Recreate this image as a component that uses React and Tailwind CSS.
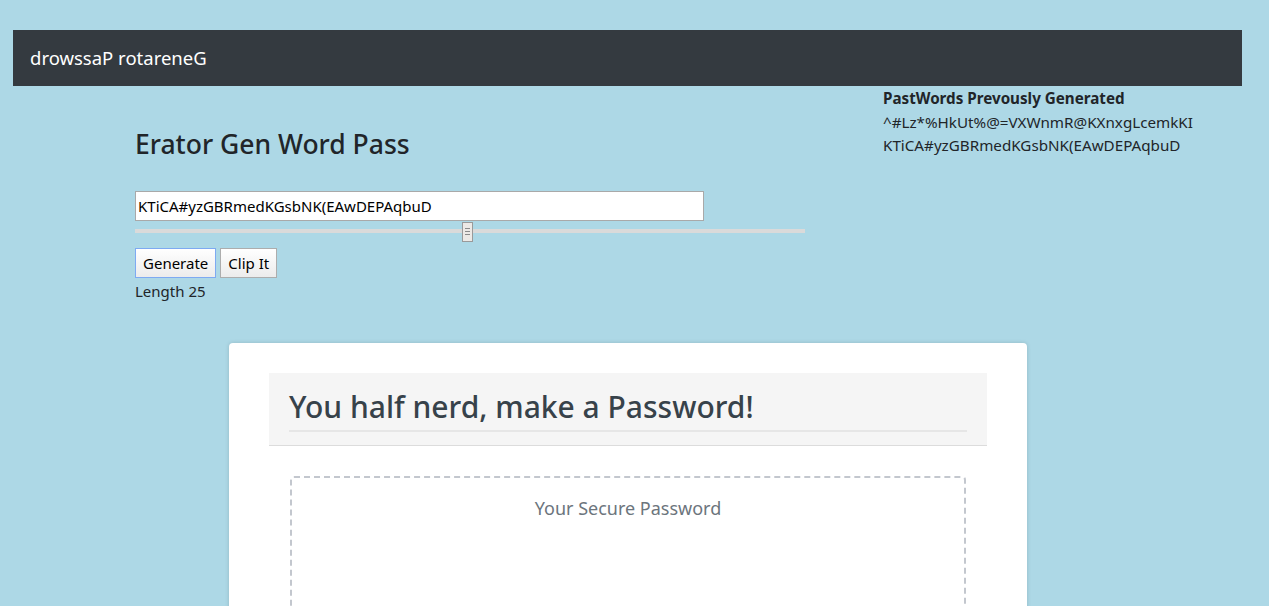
import { useState } from "react";

const history = [
  "^#Lz*%HkUt%@=VXWnmR@KXnxgLcemkKI",
  "KTiCA#yzGBRmedKGsbNK(EAwDEPAqbuD",
];

function Slider({ value }) {
  const pct = ((value - 8) / (42 - 8)) * 100;
  return (
    <div className="relative mt-[1px] h-[20px] w-[670px]">
      <div className="absolute left-0 right-0 top-[7px] h-[4px] bg-[#dadada]" />
      <div
        className="absolute top-0 flex h-[20px] w-[11px] flex-col items-center justify-center gap-[2px] border border-[#9a9a9a] bg-[#ece9e6]"
        style={{ left: `${pct}%` }}
      >
        <span className="h-px w-[5px] bg-[#8a8a8a]" />
        <span className="h-px w-[5px] bg-[#8a8a8a]" />
        <span className="h-px w-[5px] bg-[#8a8a8a]" />
      </div>
    </div>
  );
}

export default function App() {
  const [password] = useState("KTiCA#yzGBRmedKGsbNK(EAwDEPAqbuD");

  return (
    <div className="min-h-screen bg-[#add8e6] pt-[30px] font-['Noto_Sans',sans-serif] text-[#212529]">
      <nav className="ml-[13px] flex h-[56px] w-[1229px] items-center bg-[#343a40] px-[17px]">
        <span className="text-[18.5px] text-white">drowssaP rotareneG</span>
      </nav>

      <div className="ml-[13px] flex w-[1229px]">
        <div className="w-[870px] pl-[122px]">
          <h3 className="mt-[43px] text-[26.5px] font-medium leading-[1.2]">Erator Gen Word Pass</h3>
          <input
            readOnly
            value={password}
            className="mt-[30px] block h-[30px] w-[569px] border border-[#a9a9a9] bg-white px-[2px] text-[15px] text-black outline-none"
          />
          <Slider value={24.6} />
          <div className="mt-[6px] flex gap-[4px] text-[15px] text-black">
            <button className="h-[30px] border border-[#7eaaf2] bg-gradient-to-b from-white to-[#ececec] px-[7px]">
              Generate
            </button>
            <button className="h-[30px] border border-[#adadad] bg-gradient-to-b from-white to-[#ececec] px-[7px]">
              Clip It
            </button>
          </div>
          <p className="mt-[1px] text-[15px] leading-[24px]">Length 25</p>
        </div>

        <div className="text-[15.2px] leading-[23.5px]">
          <p className="mt-[1px] font-bold">PastWords Prevously Generated</p>
          {history.map((h) => (
            <p key={h}>{h}</p>
          ))}
        </div>
      </div>

      <div className="ml-[229px] mt-[40px] h-[270px] w-[798px] rounded-t-[4px] bg-white px-[40px] pt-[30px] shadow-[0_0_4px_rgba(0,0,0,0.15)]">
        <div className="border-b border-[#dcdcdc] bg-[#f5f5f5] px-[20px] pb-[13px] pt-[16px]">
          <h1 className="border-b-2 border-[#e6e6e6] pb-[5px] text-[30px] font-medium leading-[1.2] text-[#37424a]">
            You half nerd, make a Password!
          </h1>
        </div>
        <div className="mx-[21px] mt-[30px] h-[200px] rounded-t-[4px] border-2 border-dashed border-[#c3c7ce] pt-[17px] text-center">
          <p className="text-[18px] text-[#6c757d]">Your Secure Password</p>
        </div>
      </div>
    </div>
  );
}
